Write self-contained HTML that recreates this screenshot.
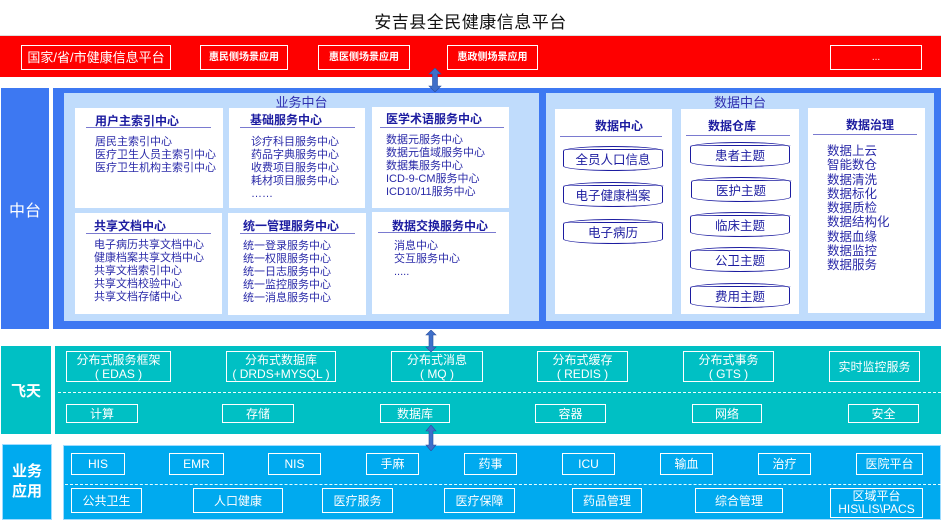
<!DOCTYPE html>
<html><head><meta charset="utf-8"><style>
*{margin:0;padding:0;box-sizing:border-box}
body{width:941px;height:522px;position:relative;background:#fff;font-family:"Liberation Sans","Noto Sans CJK SC",sans-serif;overflow:hidden}
.a{position:absolute}
.wb{position:absolute;border:1.5px solid #fff;color:#fff;display:flex;align-items:center;justify-content:center;text-align:center;line-height:14px}
.card{position:absolute;background:#fff}
.h{position:absolute;font-weight:bold;color:#1c1ca0;font-size:12px}
.hl{position:absolute;height:1px;background:#7a7ad0}
.t{position:absolute;color:#2a2aa8;font-size:11px;line-height:13px}
.cyl{position:absolute;width:100px;height:25px;border:1.5px solid #1c1ca0;border-radius:50%/5px;display:flex;align-items:center;justify-content:center;color:#1c1ca0;font-size:12.5px}
.cyl:before{content:"";position:absolute;left:-1.5px;right:-1.5px;top:2px;height:0;border-top:1px solid #1c1ca0;border-radius:50%}
</style></head><body>
<div class="a" style="left:0;top:8px;width:941px;text-align:center;font-size:17px;letter-spacing:0.5px;color:#111">安吉县全民健康信息平台</div>
<div class="a" style="left:0;top:35px;width:941px;height:42px;background:#fe0000;border-top:1px solid #ddd"></div>
<div class="wb" style="left:21px;top:45px;width:150px;height:25px;font-size:13px">国家/省/市健康信息平台</div>
<div class="wb" style="left:200px;top:45px;width:88px;height:25px;font-size:10px;font-weight:bold">惠民侧场景应用</div>
<div class="wb" style="left:318px;top:45px;width:92px;height:25px;font-size:10px;font-weight:bold">惠医侧场景应用</div>
<div class="wb" style="left:447px;top:45px;width:91px;height:25px;font-size:10px;font-weight:bold">惠政侧场景应用</div>
<div class="wb" style="left:830px;top:45px;width:92px;height:25px;font-size:10px">...</div>

<div class="a" style="left:1px;top:88px;width:48px;height:241px;background:#3d78f2;color:#fff;font-size:16px;display:flex;align-items:center;justify-content:center">中台</div>
<div class="a" style="left:53px;top:88px;width:888px;height:241px;background:#3d78f2"></div>
<div class="a" style="left:64px;top:93px;width:475px;height:228px;background:#c0dcfc"></div>
<div class="a" style="left:546px;top:93px;width:388px;height:228px;background:#c0dcfc"></div>
<div class="a" style="left:64px;top:92px;width:475px;text-align:center;font-size:13px;color:#3030b0">业务中台</div>
<div class="a" style="left:546px;top:92px;width:388px;text-align:center;font-size:13px;color:#3030b0">数据中台</div>

<div class="card" style="left:75px;top:108px;width:148px;height:100px"></div>
<div class="card" style="left:229px;top:108px;width:136px;height:100px"></div>
<div class="card" style="left:372px;top:107px;width:137px;height:101px"></div>
<div class="card" style="left:75px;top:213px;width:147px;height:101px"></div>
<div class="card" style="left:228px;top:213px;width:138px;height:102px"></div>
<div class="card" style="left:372px;top:212px;width:137px;height:102px"></div>

<div class="h" style="left:95px;top:112px">用户主索引中心</div><div class="hl" style="left:86px;top:127px;width:125px"></div>
<div class="t" style="left:95px;top:136px">居民主索引中心<br>医疗卫生人员主索引中心<br>医疗卫生机构主索引中心</div>
<div class="h" style="left:250px;top:111px">基础服务中心</div><div class="hl" style="left:240px;top:127px;width:115px"></div>
<div class="t" style="left:251px;top:136px">诊疗科目服务中心<br>药品字典服务中心<br>收费项目服务中心<br>耗材项目服务中心<br>……</div>
<div class="h" style="left:386px;top:110px">医学术语服务中心</div><div class="hl" style="left:380px;top:127px;width:124px"></div>
<div class="t" style="left:386px;top:134px">数据元服务中心<br>数据元值域服务中心<br>数据集服务中心<br>ICD-9-CM服务中心<br>ICD10/11服务中心</div>
<div class="h" style="left:94px;top:217px">共享文档中心</div><div class="hl" style="left:86px;top:233px;width:125px"></div>
<div class="t" style="left:94px;top:239px">电子病历共享文档中心<br>健康档案共享文档中心<br>共享文档索引中心<br>共享文档校验中心<br>共享文档存储中心</div>
<div class="h" style="left:243px;top:217px">统一管理服务中心</div><div class="hl" style="left:240px;top:233px;width:115px"></div>
<div class="t" style="left:243px;top:240px">统一登录服务中心<br>统一权限服务中心<br>统一日志服务中心<br>统一监控服务中心<br>统一消息服务中心</div>
<div class="h" style="left:392px;top:217px">数据交换服务中心</div><div class="hl" style="left:378px;top:232px;width:118px"></div>
<div class="t" style="left:394px;top:240px">消息中心<br>交互服务中心<br>.....</div>

<div class="card" style="left:555px;top:109px;width:117px;height:205px"></div>
<div class="card" style="left:681px;top:109px;width:118px;height:205px"></div>
<div class="card" style="left:808px;top:108px;width:117px;height:205px"></div>
<div class="h" style="left:595px;top:117px">数据中心</div><div class="hl" style="left:560px;top:136px;width:102px"></div>
<div class="h" style="left:708px;top:117px">数据仓库</div><div class="hl" style="left:686px;top:135px;width:104px"></div>
<div class="h" style="left:846px;top:116px">数据治理</div><div class="hl" style="left:813px;top:134px;width:104px"></div>
<div class="cyl" style="left:563px;top:146px">全员人口信息</div>
<div class="cyl" style="left:563px;top:182px">电子健康档案</div>
<div class="cyl" style="left:563px;top:219px">电子病历</div>
<div class="cyl" style="left:690px;top:142px">患者主题</div>
<div class="cyl" style="left:691px;top:177px">医护主题</div>
<div class="cyl" style="left:690px;top:212px">临床主题</div>
<div class="cyl" style="left:690px;top:247px">公卫主题</div>
<div class="cyl" style="left:690px;top:283px">费用主题</div>
<div class="t" style="left:827px;top:144px;font-size:12.5px;line-height:14.3px">数据上云<br>智能数仓<br>数据清洗<br>数据标化<br>数据质检<br>数据结构化<br>数据血缘<br>数据监控<br>数据服务</div>

<div class="a" style="left:1px;top:346px;width:50px;height:88px;background:#00c0c4;color:#fff;font-weight:bold;font-size:15px;display:flex;align-items:center;justify-content:center">飞天</div>
<div class="a" style="left:55px;top:346px;width:886px;height:88px;background:#00c0c4"></div>
<div class="a" style="left:58px;top:392px;width:883px;border-top:1px dashed #e8ffff"></div>
<div class="wb" style="left:66px;top:351px;width:105px;height:31px;font-size:12px">分布式服务框架<br>( EDAS )</div>
<div class="wb" style="left:226px;top:351px;width:110px;height:31px;font-size:12px">分布式数据库<br>( DRDS+MYSQL )</div>
<div class="wb" style="left:391px;top:351px;width:92px;height:31px;font-size:12px">分布式消息<br>( MQ )</div>
<div class="wb" style="left:537px;top:351px;width:91px;height:31px;font-size:12px">分布式缓存<br>( REDIS )</div>
<div class="wb" style="left:683px;top:351px;width:91px;height:31px;font-size:12px">分布式事务<br>( GTS )</div>
<div class="wb" style="left:829px;top:351px;width:91px;height:31px;font-size:12px">实时监控服务</div>
<div class="wb" style="left:66px;top:404px;width:72px;height:19px;font-size:12px">计算</div>
<div class="wb" style="left:222px;top:404px;width:72px;height:19px;font-size:12px">存储</div>
<div class="wb" style="left:380px;top:404px;width:70px;height:19px;font-size:12px">数据库</div>
<div class="wb" style="left:535px;top:404px;width:71px;height:19px;font-size:12px">容器</div>
<div class="wb" style="left:692px;top:404px;width:70px;height:19px;font-size:12px">网络</div>
<div class="wb" style="left:848px;top:404px;width:71px;height:19px;font-size:12px">安全</div>

<div class="a" style="left:2px;top:444px;width:50px;height:76px;background:#00aaef;border:1px solid #9fdcff;color:#fff;font-weight:bold;font-size:15px;display:flex;align-items:center;justify-content:center;text-align:center;line-height:20px">业务<br>应用</div>
<div class="a" style="left:63px;top:445px;width:878px;height:75px;background:#00aaef;border:1px solid #9fdcff"></div>
<div class="a" style="left:65px;top:484px;width:876px;border-top:1px dashed #e8ffff"></div>
<div class="wb" style="left:71px;top:453px;width:54px;height:22px;font-size:12px">HIS</div>
<div class="wb" style="left:169px;top:453px;width:55px;height:22px;font-size:12px">EMR</div>
<div class="wb" style="left:268px;top:453px;width:53px;height:22px;font-size:12px">NIS</div>
<div class="wb" style="left:366px;top:453px;width:53px;height:22px;font-size:12px">手麻</div>
<div class="wb" style="left:464px;top:453px;width:53px;height:22px;font-size:12px">药事</div>
<div class="wb" style="left:562px;top:453px;width:53px;height:22px;font-size:12px">ICU</div>
<div class="wb" style="left:660px;top:453px;width:53px;height:22px;font-size:12px">输血</div>
<div class="wb" style="left:758px;top:453px;width:53px;height:22px;font-size:12px">治疗</div>
<div class="wb" style="left:856px;top:453px;width:67px;height:22px;font-size:12px">医院平台</div>
<div class="wb" style="left:71px;top:488px;width:71px;height:25px;font-size:12px">公共卫生</div>
<div class="wb" style="left:193px;top:488px;width:90px;height:25px;font-size:12px">人口健康</div>
<div class="wb" style="left:322px;top:488px;width:71px;height:25px;font-size:12px">医疗服务</div>
<div class="wb" style="left:444px;top:488px;width:71px;height:25px;font-size:12px">医疗保障</div>
<div class="wb" style="left:572px;top:488px;width:70px;height:25px;font-size:12px">药品管理</div>
<div class="wb" style="left:695px;top:488px;width:88px;height:25px;font-size:12px">综合管理</div>
<div class="wb" style="left:830px;top:488px;width:93px;height:30px;font-size:12px;line-height:13px">区域平台<br>HIS\LIS\PACS</div>

<svg class="a" style="left:428px;top:68px" width="14" height="24"><path d="M7 0 L13 6 L9.5 6 L9.5 18 L13 18 L7 24 L1 18 L4.5 18 L4.5 6 L1 6 Z" fill="#3f6fc9" stroke="#2a50a0" stroke-width="0.6"/></svg>
<svg class="a" style="left:425px;top:330px" width="12" height="22"><path d="M6 0 L11 5 L8 5 L8 17 L11 17 L6 22 L1 17 L4 17 L4 5 L1 5 Z" fill="#3f6fc9" stroke="#2a50a0" stroke-width="0.6"/></svg>
<svg class="a" style="left:425px;top:425px" width="12" height="26"><path d="M6 0 L11 6 L8 6 L8 20 L11 20 L6 26 L1 20 L4 20 L4 6 L1 6 Z" fill="#3f6fc9" stroke="#2a50a0" stroke-width="0.6"/></svg>
</body></html>
